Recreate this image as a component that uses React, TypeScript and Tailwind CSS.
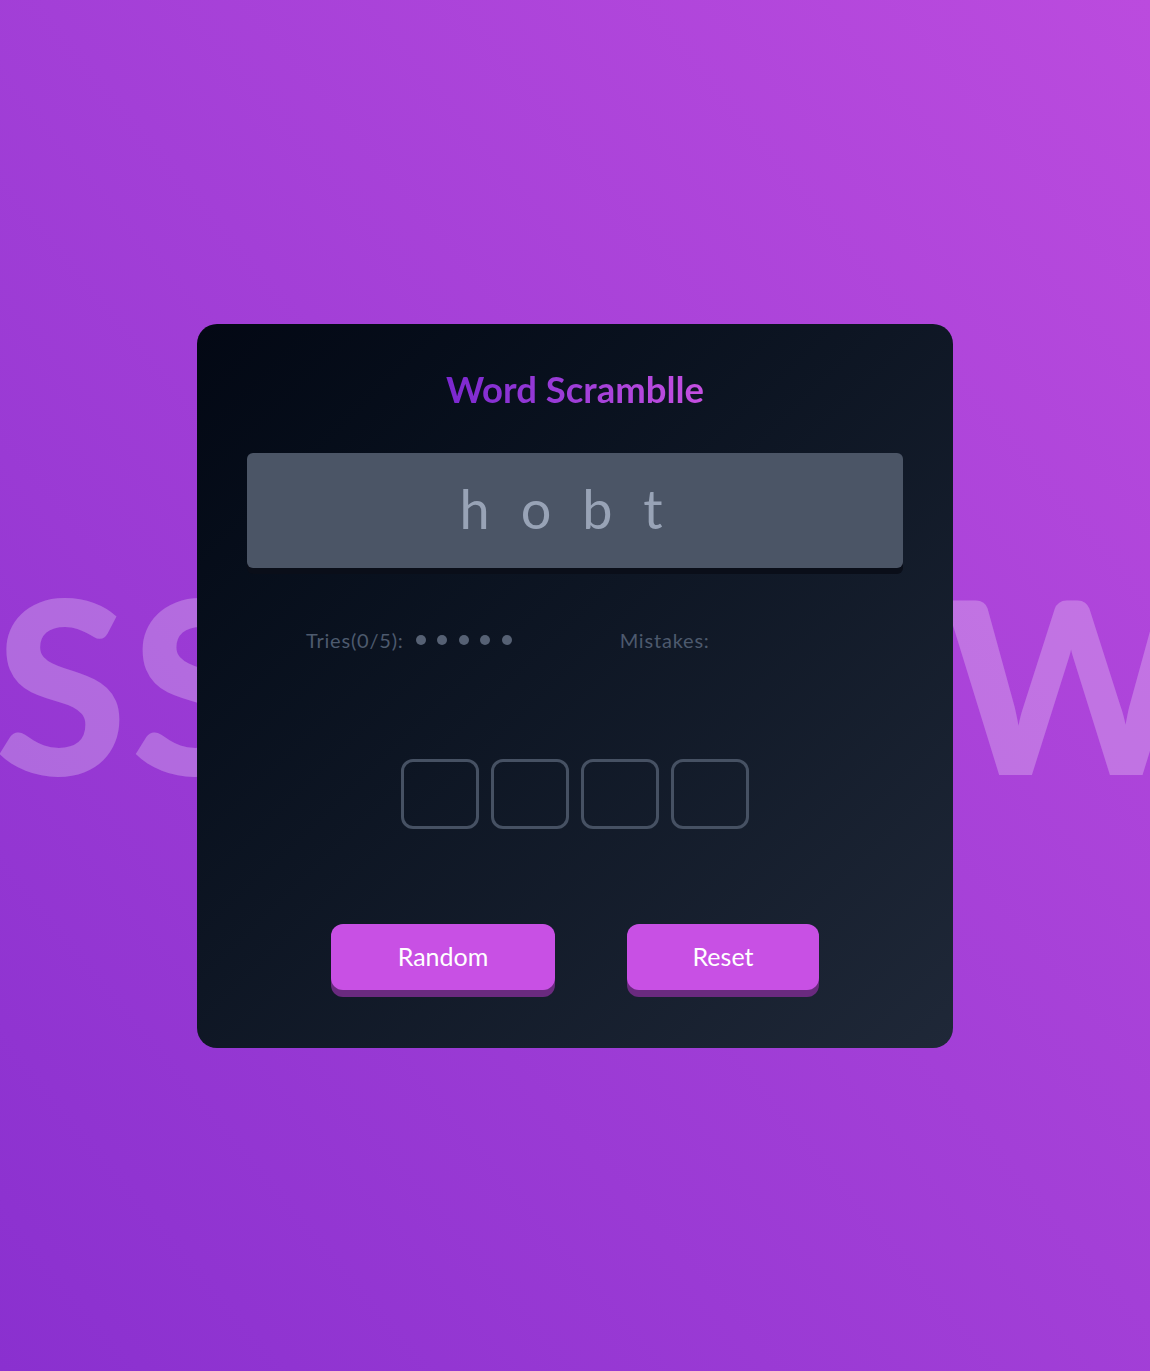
import React from 'react';

const LETTERS = ['h', 'o', 'b', 't'];

export default function App() {
  return (
    <div
      className="relative min-h-screen w-full overflow-hidden flex items-center justify-center bg-linear-to-tr from-[#8a30cf] to-[#bb4bde]"
      style={{ fontFamily: 'Lato, "Noto Sans", sans-serif' }}
    >
      {/* backdrop letters */}
      <div className="absolute inset-x-0 top-[562px] h-[260px] pointer-events-none select-none text-[240px] font-black leading-none text-white/25">
        <span className="absolute left-[-5px] top-0 tracking-[4px]">SS</span>
        <span className="absolute left-[944px] top-0">W</span>
      </div>

      <div className="relative z-10 w-[756px] h-[724px] rounded-[20px] bg-linear-to-br from-[#030814] to-[#1f2838] px-[50px] pt-[40px] flex flex-col items-center">
        <h1 className="text-[36.5px] font-bold leading-[50px] bg-linear-to-r from-[#7b27cf] to-[#c64fe1] bg-clip-text text-transparent">
          Word Scramblle
        </h1>

        <div className="mt-[39px] w-full h-[115px] rounded-[6px] bg-[#4b5566] shadow-[0_6px_0_#0a0e19] flex items-center justify-center">
          <span className="text-[54px] text-[#98a3b6] tracking-[31px] pl-[3px] leading-none -mt-[2px]">
            {LETTERS.join('')}
          </span>
        </div>

        <div className="mt-[57px] w-full flex items-center pl-[59px] text-[20px] tracking-[0.8px] text-[#4d5a6e]">
          <div className="flex items-center">
            <span>Tries(0/5):</span>
            <div className="ml-[12px] flex gap-[11.5px]">
              {[0, 1, 2, 3, 4].map((i) => (
                <span key={i} className="w-[10px] h-[10px] rounded-full bg-[#566174]" />
              ))}
            </div>
          </div>
          <span className="ml-[108px]">Mistakes:</span>
        </div>

        <div className="mt-[104px] flex gap-[12px]">
          {[0, 1, 2, 3].map((i) => (
            <div key={i} className="w-[78px] h-[70px] rounded-[12px] border-[3px] border-[#465163]" />
          ))}
        </div>

        <div className="mt-[95px] flex gap-[72px]">
          <button className="w-[224px] h-[66px] rounded-[12px] bg-[#c850e4] text-white text-[25px] shadow-[0_7px_0_#6a2a7f]">
            Random
          </button>
          <button className="w-[192px] h-[66px] rounded-[12px] bg-[#c850e4] text-white text-[25px] shadow-[0_7px_0_#6a2a7f]">
            Reset
          </button>
        </div>
      </div>
    </div>
  );
}
